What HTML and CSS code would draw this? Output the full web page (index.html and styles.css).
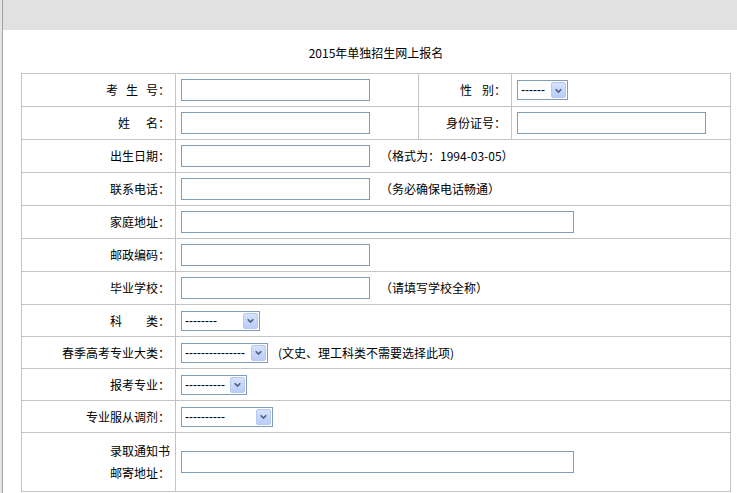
FILE: index.html
```html
<!DOCTYPE html>
<html lang="zh-CN">
<head>
<meta charset="utf-8">
<title>2015年单独招生网上报名</title>
<link rel="stylesheet" href="styles.css">
</head>
<body>
<div class="frame">
  <div class="topbar"></div>
  <div class="main">
    <div class="title">2015年单独招生网上报名</div>
    <table class="form">
      <colgroup>
        <col class="c1"><col class="c2"><col class="c3"><col class="c4">
      </colgroup>
      <tr class="r-in">
        <td class="lbl"><span class="ls8">考生</span>号：</td>
        <td><input class="txt w188" type="text"></td>
        <td class="lbl"><span class="ls10">性</span>别：</td>
        <td><span class="sel w51"><select><option>------</option></select><span class="arr"><svg viewBox="0 0 16 16" width="16" height="16"><path d="M4.5 6.5 L8 10 L11.5 6.5" fill="none" stroke="#4d6185" stroke-width="2"/></svg></span></span></td>
      </tr>
      <tr class="r-in">
        <td class="lbl"><span class="ls16">姓</span>名：</td>
        <td><input class="txt w188" type="text"></td>
        <td class="lbl">身份证号：</td>
        <td><input class="txt w189" type="text"></td>
      </tr>
      <tr class="r-in">
        <td class="lbl">出生日期：</td>
        <td colspan="3"><input class="txt w188" type="text"><span class="hint">（格式为：1994-03-05）</span></td>
      </tr>
      <tr class="r-in">
        <td class="lbl">联系电话：</td>
        <td colspan="3"><input class="txt w188" type="text"><span class="hint">（务必确保电话畅通）</span></td>
      </tr>
      <tr class="r-in">
        <td class="lbl">家庭地址：</td>
        <td colspan="3"><input class="txt w393" type="text"></td>
      </tr>
      <tr class="r-in">
        <td class="lbl">邮政编码：</td>
        <td colspan="3"><input class="txt w188" type="text"></td>
      </tr>
      <tr class="r-in">
        <td class="lbl">毕业学校：</td>
        <td colspan="3"><input class="txt w188" type="text"><span class="hint">（请填写学校全称）</span></td>
      </tr>
      <tr class="r-sel">
        <td class="lbl"><span class="ls24">科</span>类：</td>
        <td colspan="3"><span class="sel w79"><select><option>--------</option></select><span class="arr"><svg viewBox="0 0 16 16" width="16" height="16"><path d="M4.5 6.5 L8 10 L11.5 6.5" fill="none" stroke="#4d6185" stroke-width="2"/></svg></span></span></td>
      </tr>
      <tr class="r-sel">
        <td class="lbl">春季高考专业大类：</td>
        <td colspan="3"><span class="sel w87"><select><option>---------------</option></select><span class="arr"><svg viewBox="0 0 16 16" width="16" height="16"><path d="M4.5 6.5 L8 10 L11.5 6.5" fill="none" stroke="#4d6185" stroke-width="2"/></svg></span></span><span class="hint2">(文史、理工科类不需要选择此项)</span></td>
      </tr>
      <tr class="r-sel">
        <td class="lbl">报考专业：</td>
        <td colspan="3"><span class="sel w66"><select><option>----------</option></select><span class="arr"><svg viewBox="0 0 16 16" width="16" height="16"><path d="M4.5 6.5 L8 10 L11.5 6.5" fill="none" stroke="#4d6185" stroke-width="2"/></svg></span></span></td>
      </tr>
      <tr class="r-sel">
        <td class="lbl">专业服从调剂：</td>
        <td colspan="3"><span class="sel w92"><select><option>----------</option></select><span class="arr"><svg viewBox="0 0 16 16" width="16" height="16"><path d="M4.5 6.5 L8 10 L11.5 6.5" fill="none" stroke="#4d6185" stroke-width="2"/></svg></span></span></td>
      </tr>
      <tr class="r-big">
        <td class="lbl two">录取通知书<br>邮寄地址：</td>
        <td colspan="3"><input class="txt w393" type="text"></td>
      </tr>
    </table>
  </div>
</div>
</body>
</html>
```

FILE: styles.css
```css
html, body {
  margin: 0;
  padding: 0;
}

body {
  background: #e4e4e4;
  font-family: "Noto Sans CJK SC", "Liberation Sans", sans-serif;
  font-size: 12px;
  color: #000;
}

.frame {
  margin-left: 2px;
  border-left: 1px solid #a3a3a3;
  background: #fff;
  min-height: 100vh;
}

.topbar {
  height: 30px;
  background: #e1e1e1;
}

.main {
  padding: 0 6px 0 18px;
}

.title {
  width: 710px;
  height: 27px;
  padding-top: 16px;
  line-height: 14px;
  text-align: center;
}

.form {
  width: 710px;
  table-layout: fixed;
  border-collapse: collapse;
  border: 1px solid #c3c3c3;
}

.form td {
  border: 1px solid #c3c3c3;
  padding: 0 5px;
  vertical-align: middle;
  white-space: nowrap;
  line-height: 16px;
}

.c1 { width: 154px; }
.c2 { width: 243px; }
.c3 { width: 93px; }
.c4 { width: 219px; }

.r-in td { height: 32px; }
.r-sel td { height: 31px; }
.r-big td { height: 58px; }

.lbl {
  text-align: right;
}

.lbl.two {
  line-height: 22px;
}

.ls8 { letter-spacing: 8px; }
.ls10 { letter-spacing: 10px; }
.ls16 { letter-spacing: 16px; }
.ls24 { letter-spacing: 24px; }

.txt {
  box-sizing: border-box;
  height: 22px;
  margin: 0;
  padding: 0 3px;
  border: 1px solid #7f9db9;
  background: #fff;
  font: inherit;
  vertical-align: middle;
  outline: none;
}

.w188 { width: 189px; }
.w189 { width: 189px; }
.w393 { width: 393px; }

.hint {
  margin-left: 10px;
  vertical-align: middle;
}

.hint2 {
  margin-left: 10px;
  vertical-align: middle;
}

.sel {
  position: relative;
  display: inline-block;
  box-sizing: border-box;
  height: 20px;
  border: 1px solid #7f9db9;
  background: #fff;
  vertical-align: middle;
}

.sel select {
  -webkit-appearance: none;
  appearance: none;
  display: block;
  box-sizing: border-box;
  width: 100%;
  height: 18px;
  margin: 0;
  padding: 0 0 0 3px;
  border: 0;
  background: transparent;
  font-family: "Liberation Sans", sans-serif;
  font-size: 12px;
  color: #000;
  outline: none;
}

.arr {
  position: absolute;
  top: 1px;
  right: 1px;
  width: 15px;
  height: 16px;
  box-sizing: border-box;
  border: 1px solid #b6c8f3;
  border-radius: 2px;
  background: linear-gradient(#d7e3fd, #b8ccf8);
  display: flex;
  align-items: center;
  justify-content: center;
}

.arr svg {
  width: 13px;
  height: 13px;
}

.w51 { width: 51px; }
.w79 { width: 79px; }
.w87 { width: 87px; }
.w66 { width: 66px; }
.w92 { width: 92px; }
```
